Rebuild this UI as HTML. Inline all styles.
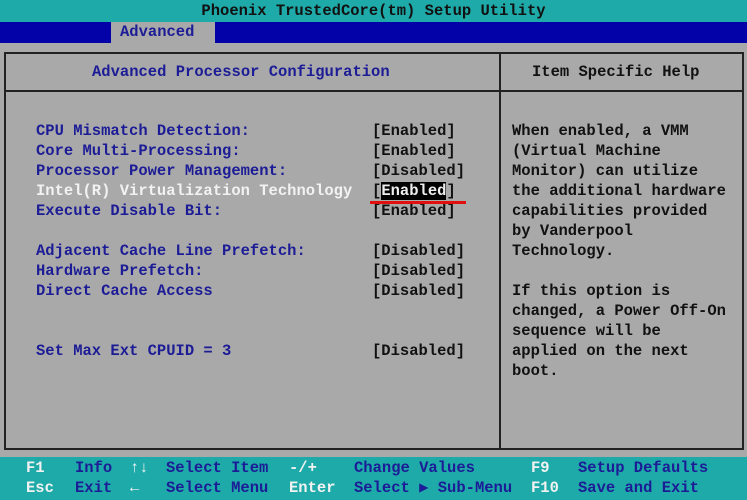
<!DOCTYPE html>
<html><head><style>
body{margin:0;width:747px;height:500px;background:#a9a9a9;position:relative;overflow:hidden;font-family:"Liberation Mono",monospace;font-size:15.5px;font-weight:bold}
div{position:absolute;white-space:pre;line-height:20px}
.b{color:#1c1c96}.k{color:#111}.w{color:#f2f2f2}
</style></head><body>
<div style="left:0;top:0;width:747px;height:22px;background:#1eaaa8"></div>
<div style="left:0;top:1px;width:747px;text-align:center;color:#111">Phoenix TrustedCore(tm) Setup Utility</div>
<div style="left:0;top:22px;width:747px;height:21px;background:#0202a8"></div>
<div style="left:111px;top:22px;width:104px;height:21px;background:#a9a9a9"></div>
<div class="b" style="left:120px;top:22px">Advanced</div>
<div style="left:4px;top:52px;width:736px;height:394px;border:2px solid #222"></div>
<div style="left:499px;top:52px;width:2px;height:396px;background:#222"></div>
<div style="left:4px;top:90px;width:738px;height:2px;background:#222"></div>
<div class="b" style="left:92px;top:62px">Advanced Processor Configuration</div>
<div class="k" style="left:532px;top:62px">Item Specific Help</div>
<div class="b" style="left:36px;top:121px">CPU Mismatch Detection:
Core Multi-Processing:
Processor Power Management:</div>
<div class="w" style="left:36px;top:181px">Intel(R) Virtualization Technology</div>
<div class="b" style="left:36px;top:201px">Execute Disable Bit:

Adjacent Cache Line Prefetch:
Hardware Prefetch:
Direct Cache Access


Set Max Ext CPUID = 3</div>
<div class="k" style="left:372px;top:121px">[Enabled]
[Enabled]
[Disabled]</div>
<div class="k" style="left:372px;top:181px">[<span style="background:#000;color:#eee">Enabled</span>]</div>
<div class="k" style="left:372px;top:201px">[Enabled]

[Disabled]
[Disabled]
[Disabled]


[Disabled]</div>
<div style="left:370px;top:201px;width:96px;height:3px;background:#e01010"></div>
<div class="k" style="left:512px;top:121px">When enabled, a VMM
(Virtual Machine
Monitor) can utilize
the additional hardware
capabilities provided
by Vanderpool
Technology.

If this option is
changed, a Power Off-On
sequence will be
applied on the next
boot.</div>
<div style="left:0;top:457px;width:747px;height:43px;background:#1eaaa8"></div>
<div class="w" style="left:26px;top:458px">F1 </div><div class="b" style="left:75px;top:458px">Info</div>
<div class="w" style="left:130px;top:458px">↑↓</div><div class="b" style="left:166px;top:458px">Select Item</div>
<div class="w" style="left:289px;top:458px">-/+</div><div class="b" style="left:354px;top:458px">Change Values</div>
<div class="w" style="left:531px;top:458px">F9</div><div class="b" style="left:578px;top:458px">Setup Defaults</div>
<div class="w" style="left:26px;top:478px">Esc</div><div class="b" style="left:75px;top:478px">Exit</div>
<div class="w" style="left:130px;top:478px">←</div><div class="b" style="left:166px;top:478px">Select Menu</div>
<div class="w" style="left:289px;top:478px">Enter</div><div class="b" style="left:354px;top:478px">Select ▶ Sub-Menu</div>
<div class="w" style="left:531px;top:478px">F10</div><div class="b" style="left:578px;top:478px">Save and Exit</div>
</body></html>
